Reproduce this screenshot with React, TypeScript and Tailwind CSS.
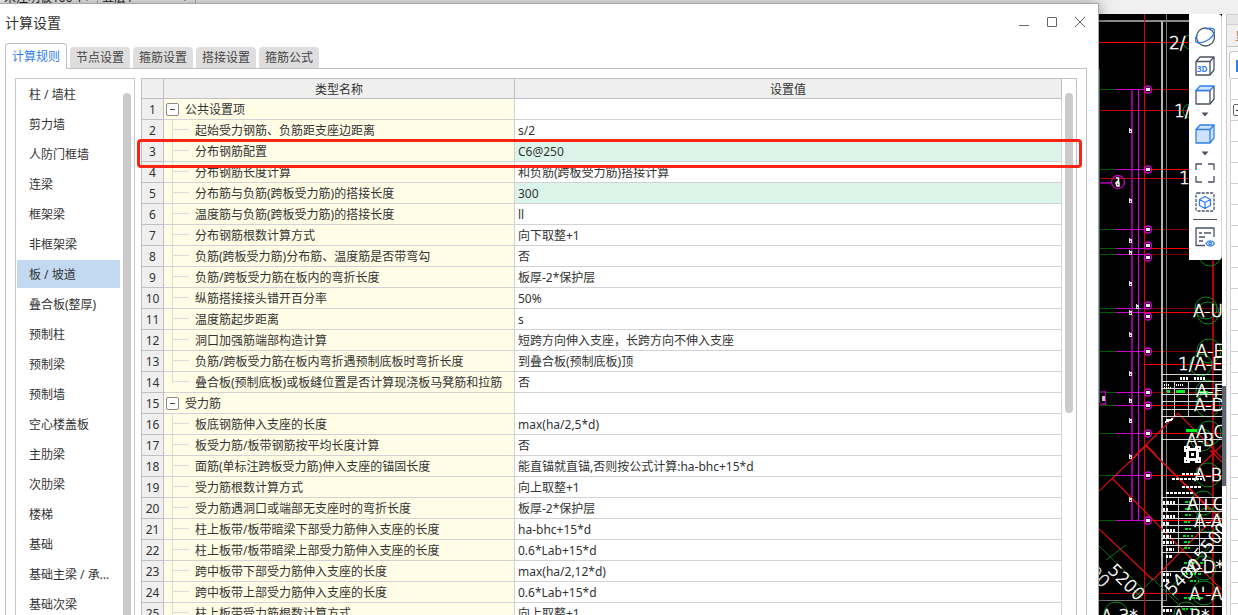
import { useState } from 'react';
import type { ReactNode } from 'react';
import clsx from 'clsx';

const tabs = ['计算规则', '节点设置', '箍筋设置', '搭接设置', '箍筋公式'];

const categories = [
    '柱 / 墙柱',
    '剪力墙',
    '人防门框墙',
    '连梁',
    '框架梁',
    '非框架梁',
    '板 / 坡道',
    '叠合板(整厚)',
    '预制柱',
    '预制梁',
    '预制墙',
    '空心楼盖板',
    '主肋梁',
    '次肋梁',
    '楼梯',
    '基础',
    '基础主梁 / 承台梁',
    '基础次梁',
];

type Row = {
    name: string;
    value?: string;
    group?: boolean;
    last?: boolean;
    changed?: boolean;
};

const rows: Row[] = [
    { name: '公共设置项', group: true },
    { name: '起始受力钢筋、负筋距支座边距离', value: 's/2' },
    { name: '分布钢筋配置', value: 'C6@250', changed: true },
    { name: '分布钢筋长度计算', value: '和负筋(跨板受力筋)搭接计算' },
    { name: '分布筋与负筋(跨板受力筋)的搭接长度', value: '300', changed: true },
    { name: '温度筋与负筋(跨板受力筋)的搭接长度', value: 'll' },
    { name: '分布钢筋根数计算方式', value: '向下取整+1' },
    { name: '负筋(跨板受力筋)分布筋、温度筋是否带弯勾', value: '否' },
    { name: '负筋/跨板受力筋在板内的弯折长度', value: '板厚-2*保护层' },
    { name: '纵筋搭接接头错开百分率', value: '50%' },
    { name: '温度筋起步距离', value: 's' },
    { name: '洞口加强筋端部构造计算', value: '短跨方向伸入支座，长跨方向不伸入支座' },
    { name: '负筋/跨板受力筋在板内弯折遇预制底板时弯折长度', value: '到叠合板(预制底板)顶' },
    { name: '叠合板(预制底板)或板缝位置是否计算现浇板马凳筋和拉筋', value: '否', last: true },
    { name: '受力筋', group: true },
    { name: '板底钢筋伸入支座的长度', value: 'max(ha/2,5*d)' },
    { name: '板受力筋/板带钢筋按平均长度计算', value: '否' },
    { name: '面筋(单标注跨板受力筋)伸入支座的锚固长度', value: '能直锚就直锚,否则按公式计算:ha-bhc+15*d' },
    { name: '受力筋根数计算方式', value: '向上取整+1' },
    { name: '受力筋遇洞口或端部无支座时的弯折长度', value: '板厚-2*保护层' },
    { name: '柱上板带/板带暗梁下部受力筋伸入支座的长度', value: 'ha-bhc+15*d' },
    { name: '柱上板带/板带暗梁上部受力筋伸入支座的长度', value: '0.6*Lab+15*d' },
    { name: '跨中板带下部受力筋伸入支座的长度', value: 'max(ha/2,12*d)' },
    { name: '跨中板带上部受力筋伸入支座的长度', value: '0.6*Lab+15*d' },
    { name: '柱上板带受力筋根数计算方式', value: '向上取整+1' },
];

/* ---------- drawing area ---------- */

// y of the axis line, y of the bubble, colour of the part right of the bubble
const axes = [
    { y: 89, bubble: 89, color: '#b00000' },
    { y: 169, bubble: 169, color: '#f00' },
    { y: 229, bubble: 229, color: '#800000' },
    { y: 248, bubble: 245, color: '#f00' },
    { y: 254, bubble: 257, color: '#800000' },
    { y: 308, bubble: 305, color: '#800000' },
    { y: 312, bubble: 316, color: '#f00' },
    { y: 351, bubble: 351, color: '#800000' },
    { y: 392, bubble: 392, color: '#800000' },
    { y: 405, bubble: 405, color: '#f00' },
    { y: 433, bubble: 433, color: '#f00' },
    { y: 475, bubble: 475, color: '#f00' },
    { y: 520, bubble: 520, color: '#f00' },
];

const labels = [
    { x: 71, y: 49, text: '2/' },
    { x: 76, y: 117, text: '1/' },
    { x: 81, y: 184, text: '1' },
    { x: 95, y: 317, text: 'A-U' },
    { x: 98, y: 357, text: 'A-E' },
    { x: 80, y: 370, text: '1/A-E' },
    { x: 98, y: 397, text: 'A-F' },
    { x: 96, y: 411, text: 'A-D' },
    { x: 98, y: 438, text: 'A-C' },
    { x: 88, y: 446, text: 'A-B' },
    { x: 96, y: 481, text: 'A-B' },
    { x: 89, y: 510, text: 'A+C*' },
    { x: 96, y: 527, text: 'A-A' },
    { x: 87, y: 573, text: 'A-D*' },
    { x: 91, y: 600, text: "A'-A" },
    { x: 75, y: 622, text: 'A-B*' },
    { x: 3, y: 622, text: 'A-3*' },
];

const greenBubbles = [
    [92, 42, 7], [92, 111, 7], [112, 255, 11], [108, 308, 11], [110, 313, 11], [111, 351, 12], [103, 365, 11],
    [109, 391, 11], [110, 405, 12], [111, 433, 12], [104, 440, 11], [110, 475, 12], [105, 503, 12],
    [110, 520, 12], [106, 568, 12], [106, 593, 12], [88, 614, 12], [18, 614, 12],
];

const tableLines = [374, 381, 388, 394, 401, 409, 416, 439, 497, 504, 511, 518, 525, 532, 538, 545, 552, 571, 606];

const marks = [
    [31, 128], [31, 198], [31, 238], [31, 250], [31, 281], [38, 304], [31, 310], [31, 332], [31, 371],
    [31, 398], [31, 418], [31, 454], [31, 497],
];

function Drawing() {
    return (
        <svg
            className="w-[124px] h-[601px] shrink-0 bg-black"
            viewBox="0 14 124 601"
            fill="none"
            shapeRendering="crispEdges"
        >
            <path d="M0 21H92" stroke="#8a8a8a" strokeWidth="2" />
            <path d="M68.500 14V600.500H0" stroke="#777" />
            <path d="M46.500 14V615" stroke="#e00000" />
            <path d="M115 256V615" stroke="#b00000" strokeWidth="2" />
            <path d="M0 42.500H92M46 364.500H124M46 593.500H124" stroke="#f00" />
            <path d="M0 110.500H92M0 178.500H92" stroke="#d00000" />
            <path d="M0 593.500H46" stroke="#b00000" />

            {axes.map((a) => (
                <g key={a.y}>
                    <path d={`M46 ${a.y}.5H124`} stroke={a.color} />
                    <path d={`M0 ${a.y}.5H18`} stroke="#006400" />
                    <path d={`M18 ${a.y}.5H47`} stroke="#d000d0" />
                </g>
            ))}
            <path d="M34 89V520" stroke="#900090" strokeWidth="2" />
            <path d="M40.500 89V520" stroke="#e000e0" />
            <path d="M0 182.500H14M2 392H7M2 404H7" stroke="#900090" strokeWidth="2" />
            <path d="M7.500 391V405" stroke="#d000d0" />
            <path d="M1 69V403" stroke="#3c7474" strokeWidth="2" />
            <path d="M64 21V615" stroke="#b4b4b4" strokeWidth="2" />

            <g shapeRendering="auto">
                <path
                    d="M33 460L57 436L80 413L124 458M48 445L58 455M0 492L48 446L124 520M0 528L55 580M14 478L124 590M57 455L112 510M55 580L124 510M98 470L124 445M112 450L124 462"
                    stroke="#e01010"
                    strokeWidth="1.200"
                />
                <path d="M0 545L44 588M8 560L28 545M36 598L54 580M34 588L44 598M70 590L118 540M54 578L88 612M70 590L80 600" stroke="#0a7a18" />
                {greenBubbles.map(([x, y, r], i) => (
                    <circle key={i} cx={x} cy={y} r={r} stroke="#0a8a1c" />
                ))}
                {axes.map((a) => (
                    <g key={a.bubble}>
                        <circle cx="50" cy={a.bubble + 0.5} r="3.500" stroke="#e000e0" strokeWidth="1.300" />
                        <rect x="48" y={a.bubble - 1} width="4" height="3" fill="#eee" />
                    </g>
                ))}
                <circle cx="20" cy="182" r="6.500" stroke="#c000c0" strokeWidth="1.300" />
                <path d="M18 178h2.500v3.500h-2M18 183h3v3h-2z" stroke="#fff" strokeWidth="1.500" />
            </g>

            {marks.map(([x, y]) => (
                <path key={y} d={`M${x} ${y}v4h2v-3h-2M${x + 1} ${y + 2}h1`} stroke="#ddd" />
            ))}
            <rect x="4" y="396" width="3" height="5" fill="#ddd" />

            {/* drawing list and legend */}
            {tableLines.map((y) => (
                <path key={y} d={`M63 ${y}.5H124`} stroke="#d8d8d8" />
            ))}
            <path d="M76.500 381V416M90.500 381V416M80.500 497V552M101.500 497V552" stroke="#c8c8c8" />
            <path d="M82 378.500h9M96 378.500h11" stroke="#fff" strokeWidth="3" strokeDasharray="2 1" />
            <path d="M66 384.500h6M78 384.500h8M66 387.500h7" stroke="#fff" strokeWidth="2" strokeDasharray="1 1" />
            <path d="M69 391.500h3M78 391.500h9M88 430.500h11M102 392h8" stroke="#00f020" strokeWidth="3" />
            <path d="M67 422l8 -3M68 420h6" stroke="#fff" strokeWidth="2" />
            <path
                d="M84 473.500h18M74 478.500h30M84 486.500h20M68 492.500h28"
                stroke="#fff"
                strokeWidth="2"
                strokeDasharray="3 1"
            />
            <path d="M65 502h12M65 509h5M65 516h12M65 523h6M65 530h12M65 536h8M65 542h11M68 549h8M68 556h7M65 574h8M65 580h6M65 610h10" stroke="#fff" strokeWidth="3" strokeDasharray="2 1 3 1" />
            <path
                d="M87 502h8M87 509h6M87 515h8M86 522h8M87 529h6M85 536h10M86 542h8M86 548h8M86 563h19M84 574h20M92 581h9M86 598h20M84 609h12"
                stroke="#00d81c"
                strokeWidth="2"
                strokeDasharray="3 1 2 2"
            />
            <path d="M86 446h6v2h5v-2h6v6h-2v5h2v6h-6v-2h-5v2h-6v-6h2v-5h-2z" fill="#fff" />
            <path d="M91 451h7v7h-7zM88 448h1v1h-1zM100 448h1v1h-1zM88 460h1v1h-1zM100 460h1v1h-1z" fill="#000" />
            <rect x="93" y="453" width="3" height="3" fill="#fff" />

            <g fill="#fff" fontFamily='"DejaVu Sans", sans-serif' fontSize="17" fontWeight="200" stroke="#fff" strokeWidth="0.500" shapeRendering="auto">
                {labels.map((l) => (
                    <text key={l.y} x={l.x} y={l.y}>{l.text}</text>
                ))}
                <text transform="translate(9 571) rotate(45)">5200</text>
                <text transform="translate(-26 558) rotate(45)">5400</text>
                <text transform="translate(74 596) rotate(-45)">5400</text>
                <text transform="translate(104 562) rotate(-50)">5500</text>
            </g>
        </svg>
    );
}

/* ---------- view toolbar ---------- */

function ToolIcon({ label, children }: { label: string; children: ReactNode }) {
    return (
        <button aria-label={label} className="block">
            <svg className="w-5 h-5" viewBox="0 0 20 20" fill="none" stroke="#4b5263" strokeWidth="1.300" strokeLinejoin="round">
                {children}
            </svg>
        </button>
    );
}

function DownArrow() {
    return (
        <svg className="w-2 h-[5px]" viewBox="0 0 8 5">
            <path d="M0.500 0.500h7L4 4.500z" fill="#4b5263" />
        </svg>
    );
}

function ViewToolbar() {
    return (
        <div className="absolute top-0 right-0 w-[33px] h-[246px] pt-[13px] bg-white border-r border-[#d4d4d8] rounded-r flex flex-col items-center">
            <div className="flex flex-col gap-[9px]">
                <ToolIcon label="动态观察">
                    <circle cx="10.500" cy="10" r="9" />
                    <path d="M2.500 8C0 11 -0.800 13.500 1 15C4 17 10 15 14.500 12C18.500 9 20.500 4.500 19 2.500C17.500 0.800 14 1.200 11.500 2.200" stroke="#2f80ed" strokeWidth="1.400" />
                </ToolIcon>
                <ToolIcon label="三维">
                    <path d="M1 5.500h14V19H1zM1 5.500L5 1h14l-4 4.500M19 1v13l-4 5" />
                    <text x="2" y="16" fontSize="8" fontWeight="700" fontFamily='"Open Sans", sans-serif' fill="#2f80ed" stroke="none">3D</text>
                </ToolIcon>
                <ToolIcon label="俯视">
                    <path d="M1 5.500h14V19H1zM19 1v13l-4 5" />
                    <path d="M1 5.500L5 1h14l-4 4.500z" fill="#cfe2fb" stroke="#2f80ed" />
                </ToolIcon>
            </div>
            <div className="my-[7px]"><DownArrow /></div>
            <ToolIcon label="实体显示">
                <path d="M1 5.500L5 1h14v13l-4 5H1zM1 5.500h14V19M15 5.500L19 1" fill="#cfe2fb" stroke="#2f80ed" />
            </ToolIcon>
            <div className="my-[7px]"><DownArrow /></div>
            <div className="flex flex-col gap-[9px]">
                <ToolIcon label="全屏">
                    <path d="M1 7V1h6M13 1h6v6M19 13v6h-6M7 19H1v-6" />
                </ToolIcon>
                <ToolIcon label="局部三维">
                    <rect x="1" y="1" width="18" height="18" rx="1.500" strokeDasharray="3 1.200" />
                    <path d="M10 4.500l5.500 3v6L10 16.500l-5.500-3v-6zM4.500 7.500l5.500 3 5.500-3M10 10.500v6" stroke="#2f80ed" />
                </ToolIcon>
            </div>
            <div className="w-6 h-px my-[7px] bg-[#4b5263]" />
            <ToolIcon label="显示设置">
                <path d="M10 18.500H1V1h18v9M4 6h3M9 6h7M4 10h6M4 14h4" />
                <path d="M11 16.500c2-3.500 6.500-3.500 8.500 0c-2 3.500-6.500 3.500-8.500 0z" fill="#fff" stroke="#2f80ed" />
                <circle cx="15.200" cy="16.500" r="1.300" stroke="#2f80ed" />
            </ToolIcon>
        </div>
    );
}

/* ---------- main window behind the dialog ---------- */

function SidePanel() {
    return (
        <div className="w-4 shrink-0 flex bg-[#f7f7f7] overflow-hidden">
            <div className="w-1 shrink-0 flex flex-col">
                <div className="h-[372px] bg-white" />
                <div className="h-[100px] bg-[#5a6570]" />
                <div className="flex-1 bg-white" />
            </div>
            <div className="flex-1 border-l border-[#c8c8cc]">
                <div className="h-[11px] bg-[#e6e6e6] border-y border-[#d0d0d0]" />
                <div className="h-[22px] pl-2 pt-1 bg-[#f0f0f0] border-b border-[#c8c8cc] leading-4 text-[#a07850] overflow-hidden whitespace-nowrap">显</div>
                <div className="h-[27px] mt-1 ml-0.5 pl-1.5 pt-2 border-t border-l border-[#c8c8cc] rounded-tl bg-white">
                    <div className="w-3 h-3 border-l-2 border-y border-[#2f80ed]" />
                </div>
                <div className="ml-[3px] border-l border-[#d0d0d0] bg-white">
                    {Array.from({ length: 26 }, (_, i) => (
                        <div key={i} className="h-[21px] pt-1 border-t border-[#d0d0d0]">
                            {i === 1 && (
                                <div className="w-3 h-3 ml-0.5 border border-[#666] rounded-xs flex items-center pl-0.5">
                                    <div className="w-1.5 h-px bg-[#333]" />
                                </div>
                            )}
                        </div>
                    ))}
                </div>
            </div>
        </div>
    );
}

function ToolSelect({ label, value }: { label: string; value: string }) {
    return (
        <div className="w-[98px] h-6 -mt-3.5 flex items-center border-r border-[#b8b8b8]">
            <select aria-label={label} className="appearance-none flex-1 min-w-0 pl-1 bg-transparent text-[#222]">
                <option>{value}</option>
            </select>
            <svg className="w-2 h-2 mr-1.5" viewBox="0 0 8 8">
                <path d="M0 2h8L4 7z" fill="#444" />
            </svg>
        </div>
    );
}

/* ---------- dialog ---------- */

function CategoryList() {
    const [selected, setSelected] = useState('板 / 坡道');

    return (
        <div className="w-[120px] shrink-0 pl-px flex items-start border-t border-x border-[#c8c8cc]">
            <ul className="w-[103px]">
                {categories.map((item) => (
                    <li key={item} className="h-[30px] flex items-center">
                        <button
                            onClick={() => setSelected(item)}
                            className={clsx(
                                'w-full h-7 pt-0.5 pl-3 pr-1 text-left truncate',
                                selected === item && 'bg-[#c2d9f1]'
                            )}
                        >
                            {item}
                        </button>
                    </li>
                ))}
            </ul>
            <div className="w-2 h-[560px] mt-[14px] ml-[3px] bg-[#cbcbcb] rounded-t-full" />
        </div>
    );
}

function NameCell({ row }: { row: Row }) {
    if (row.group) {
        return (
            <div className="h-5 pl-0.5 flex items-center">
                <button aria-label="折叠" className="w-[13px] h-[13px] mr-1.5 bg-white border border-[#8a8a8a] rounded-xs flex items-center justify-center">
                    <span className="w-[5px] h-px bg-[#444]" />
                </button>
                <span className="pt-0.5">{row.name}</span>
            </div>
        );
    }
    return (
        <div className="h-5 pl-2 flex items-center">
            <span className={clsx('w-[17px] mr-1.5 self-stretch', !row.last && 'border-l border-[#dcdce2]')}>
                <span className={clsx('block h-2.5 border-b border-[#dcdce2]', row.last && 'border-l')} />
            </span>
            <span className="pt-0.5">{row.name}</span>
        </div>
    );
}

function RuleTable() {
    return (
        <div className="flex-1 min-w-0 flex items-start border-t border-r border-[#c0c0c4]">
            <table className="flex-1 table-fixed border-separate border-spacing-0 whitespace-nowrap">
                <colgroup>
                    <col className="w-[23px]" />
                    <col className="w-[351px]" />
                    <col />
                </colgroup>
                <thead>
                    <tr className="h-5 bg-[#efefef]">
                        <th className="p-0 border-x border-b border-[#c0c0c4]"><span className="sr-only">序号</span></th>
                        <th className="p-0 pt-0.5 font-normal border-r border-b border-[#c0c0c4]">类型名称</th>
                        <th className="p-0 pt-0.5 font-normal border-r border-b border-[#c0c0c4]">设置值</th>
                    </tr>
                </thead>
                <tbody>
                    {rows.map((row, i) => (
                        <tr key={i} className="h-[21px]">
                            <td className="p-0 pt-0.5 text-center bg-[#efefef] border-x border-b border-[#c0c0c4]">{i + 1}</td>
                            <td className="p-0 bg-[#fffde6] border-r border-b border-[#d2d2d6]">
                                <NameCell row={row} />
                            </td>
                            <td className={clsx('p-0 pt-0.5 pl-[3px] border-r border-b border-[#d2d2d6]', row.changed ? 'bg-[#dcf5ea]' : 'bg-white')}>
                                {row.value}
                            </td>
                        </tr>
                    ))}
                </tbody>
            </table>
            <div className="w-2 h-[320px] mt-[14px] mx-[3px] bg-[#cbcbcb] rounded-full" />
        </div>
    );
}

function SettingsDialog() {
    const [active, setActive] = useState(tabs[0]);

    return (
        <div
            role="dialog"
            aria-labelledby="dialog-title"
            className="absolute top-[3px] bottom-0 left-0 right-[139px] flex flex-col bg-white border-t border-r border-[#a8a8a8] shadow-[0_0_14px_rgba(0,0,0,0.4)]"
        >
            <header className="h-[39px] shrink-0 pl-[5px] pr-3 pb-0.5 flex items-center justify-between">
                <h1 id="dialog-title" className="text-sm">计算设置</h1>
                <div className="pb-0.5 flex items-center gap-4 text-[#666]">
                    <button aria-label="最小化">
                        <svg className="w-3 h-3" viewBox="0 0 12 12" stroke="currentColor"><path d="M1 9.500h10" /></svg>
                    </button>
                    <button aria-label="最大化">
                        <svg className="w-3 h-3" viewBox="0 0 12 12" stroke="currentColor" fill="none"><path d="M1.500 1.500h9v9h-9z" /></svg>
                    </button>
                    <button aria-label="关闭">
                        <svg className="w-3 h-3" viewBox="0 0 12 12" stroke="currentColor"><path d="M1 1l10 10M11 1L1 11" /></svg>
                    </button>
                </div>
            </header>

            <nav role="tablist" className="shrink-0 pl-[5px] flex items-end gap-[3px]">
                {tabs.map((tab) => (
                    <button
                        key={tab}
                        role="tab"
                        aria-selected={active === tab}
                        onClick={() => setActive(tab)}
                        className={clsx(
                            'rounded-t',
                            active === tab
                                ? 'relative z-10 h-[26px] -mb-px px-1.5 bg-white border-t border-x border-[#c0c0c8] text-[#2f80ed]'
                                : 'h-[21px] px-1.5 bg-[#dedede] text-[#444]'
                        )}
                    >
                        {tab}
                    </button>
                ))}
            </nav>

            <main className="flex-1 min-h-0 ml-[5px] mr-[11px] pt-[9px] px-[9px] flex gap-1.5 overflow-hidden border-t border-x border-[#c0c0c8]">
                <CategoryList />
                <RuleTable />
            </main>

            {/* highlight around row 3 */}
            <div className="absolute top-[135px] left-[137px] right-4 h-[29px] border-3 border-[#fa2314] rounded pointer-events-none" />
        </div>
    );
}

export default function App() {
    return (
        <div className="relative h-screen flex flex-col overflow-hidden bg-[#f0f0f0] font-['Noto_Sans','Noto_Sans_CJK_SC',sans-serif] text-xs leading-4 text-[#333]">
            <div className="h-[14px] shrink-0 flex overflow-hidden">
                <ToolSelect label="构件" value="未注明板100 1" />
                <ToolSelect label="楼层" value="五层1" />
            </div>
            <div className="flex-1 min-h-0 flex justify-end">
                <div className="relative">
                    <Drawing />
                    <ViewToolbar />
                </div>
                <SidePanel />
            </div>
            <SettingsDialog />
        </div>
    );
}
